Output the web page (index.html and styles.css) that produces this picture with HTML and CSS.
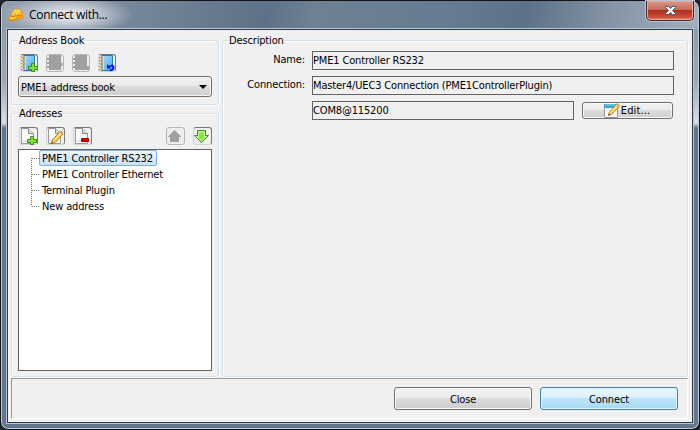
FILE: index.html
```html
<!DOCTYPE html>
<html lang="en"><head><meta charset="utf-8"><title>Connect with...</title><link rel="stylesheet" href="styles.css"></head>
<body>
<svg width="0" height="0" class="defs"><defs>
<linearGradient id="bk" x2="1" y2="1"><stop stop-color="#a5dcff"/><stop offset="1" stop-color="#4fa9ea"/></linearGradient>
<linearGradient id="hat" x2="0" y2="1"><stop stop-color="#ffd84a"/><stop offset="1" stop-color="#f08a05"/></linearGradient>
<g id="book"><path d="M3.5 1.500H14.500V16.500H3.500Z" fill="url(#bk)" stroke="#2879b7"/><path d="M5.500 2V16" stroke="#b7e4ff"/><path d="M1 3.500H5M1 6.500H5M1 9.500H5M1 12.500H5M1 15.500H5" stroke="#b99055" stroke-width="1.600"/><path d="M2 3H4M2 6H4M2 9H4M2 12H4M2 15H4" stroke="#ecd39c"/></g>
<g id="plus"><path d="M11.500 9.500H14.500V12.500H17.500V15.500H14.500V17.500H11.500V15.500H8.500V12.500H11.500Z" fill="#83e13b" stroke="#379018"/></g>
<g id="page"><path d="M2.500 1.500H9.500L14.500 6.500V16.500H2.500Z" fill="#fafafa" stroke="#999"/><path d="M9.500 1.500V6.500H14.500" fill="#ddd" stroke="#888"/><path d="M4 13H12V15H4Z" fill="#e0e0e0"/></g>
<g id="pencil"><path d="M5.500 16.500L6.500 13L14 4.500L17 7L9 15.500Z" fill="#ffd35c" stroke="#b47916"/><path d="M8 13L15 5.500" stroke="#fff0a8"/><path d="M13.500 5L16.500 7.500L17.500 6L15 3.500Z" fill="#d99a55"/><path d="M5 17L6 15L7 16Z" fill="#333"/></g>
</defs></svg>
<div class="window">
<header class="title"><svg class="hat" width="16" height="14"><path d="M.5 10.500C.5 8.500 2 8 3 7C4 3 6 1 9.500 1C13 1 14.500 4 14.500 7.500C15.500 8.500 15 10.500 13.500 10.500C10 10 8.500 12.500 5 12.800C2.500 13 .5 12.500 .5 10.500Z" fill="url(#hat)" stroke="#e08c12" stroke-width=".8"/><path d="M4.500 6.500C5.500 3.500 6.500 3 8 2M8.500 7C9 4.500 10 3 11.500 2.500M2 10C4 11 6 10.500 8 9" fill="none" stroke="#fff08a"/><path d="M3 8Q6 9.500 9 7.500Q12 6.500 14 8" fill="none" stroke="#d67d08" stroke-width=".8"/></svg><span class="caption">Connect with...</span>
<div class="close"><svg width="13" height="11"><path d="M1.500 1.500H4.500L6.500 3.500L8.500 1.500H11.500V2.500L8.500 5.500L11.500 8.500V9.500H8.500L6.500 7.500L4.500 9.500H1.500V8.500L4.500 5.500L1.500 2.500Z" fill="#fff" stroke="#535b6b"/></svg></div></header>
<main class="client">
<div class="columns">
<div class="left">
<section class="group books"><h2>Address Book</h2>
<div class="tools"><button class="tool"><svg width="19" height="19"><use href="#book"/><use href="#plus"/></svg></button><button class="tool off"><svg width="19" height="19"><path d="M3 1H15V8L17 10L15 13V16H3V14H1V12H3V10H1V8H3V6H1V4H3Z" fill="#a0a0a0"/></svg></button><button class="tool off"><svg width="19" height="19"><path d="M3 1H15V12H17V16H3V14H1V12H3V10H1V8H3V6H1V4H3Z" fill="#a0a0a0"/></svg></button><button class="tool"><svg width="19" height="19"><use href="#book"/><path d="M12 16.500C16.500 16 16.500 12 14 11.500L11 12.500" fill="none" stroke="#1117d5" stroke-width="1.800"/><path d="M9 10V14.500H13Z" fill="#1117d5"/></svg></button></div>
<div class="combo"><span>PME1 address book</span><i></i></div></section>
<section class="group addresses"><h2>Adresses</h2>
<div class="tools"><button class="tool"><svg width="19" height="19"><use href="#page"/><use href="#plus"/></svg></button><button class="tool"><svg width="19" height="19"><use href="#page"/><use href="#pencil"/></svg></button><button class="tool"><svg width="19" height="19"><use href="#page"/><path d="M8.500 11.500H15.500V14.500H8.500Z" fill="#e30000" stroke="#a40000"/></svg></button><button class="tool off up"><svg width="19" height="19"><path d="M8.500 3L15 9.500V10H13V15H4V10H2V9.500Z" fill="#a0a0a0"/></svg></button><button class="tool"><svg width="19" height="19"><path d="M4.500 3.500H12.500V8.500H15.500L8.500 15.500L1.500 8.500H4.500Z" fill="#8be64b" stroke="#368d18"/><path d="M5.500 4.500H11.500V9.500H13.500L8.500 14L3.500 9.500H5.500Z" fill="none" stroke="#d2f9aa"/></svg></button></div>
<ul class="tree"><li class="sel"><span>PME1 Controller RS232</span></li><li><span>PME1 Controller Ethernet</span></li><li><span>Terminal Plugin</span></li><li><span>New address</span></li></ul></section>
</div>
<section class="group description"><h2>Description</h2>
<div class="row"><label>Name:</label><div class="field"><span>PME1 Controller RS232</span></div></div>
<div class="row"><label>Connection:</label><div class="field"><span>Master4/UEC3 Connection (PME1ControllerPlugin)</span></div></div>
<div class="row"><label></label><div class="field"><span>COM8@115200</span></div><button class="btn edit"><svg width="16" height="16"><path d="M.5 1.500H13.500V14.500H.5Z" fill="#f6f6f6" stroke="#999"/><path d="M0 1H14V5H0Z" fill="#38a5d9"/><path d="M1 2H12" stroke="#8bd8fa"/><use href="#pencil" transform="translate(-.5 -3) scale(.92)"/></svg><span class="t-edit">Edit...</span></button></div>
</section></div>
<footer><button class="btn"><span>Close</span></button><button class="btn primary"><span>Connect</span></button></footer>
</main></div></body></html>
```
FILE: styles.css
```css
*{box-sizing:border-box}
body{margin:0;background:#24262a;font:11px/14px "DejaVu Sans Condensed","DejaVu Sans",sans-serif;font-stretch:condensed;letter-spacing:-.15px;color:#000;overflow:hidden}
.defs{position:absolute}
h2,ul{margin:0;padding:0}
button{padding:0;font:inherit;letter-spacing:inherit;color:#000}
span,h2,label{white-space:nowrap}
.window{width:700px;height:430px;border:1px solid #111319;border-radius:8px;padding:0 6px 6px;background:linear-gradient(#8796a7 0,#9aa7b5 80px,#d9e0e6 122px,#60748a 127px,#63778e);box-shadow:inset 0 0 0 1px #c3cdd5}
.title{height:28px;margin:0 -5px;padding:1px 0 0 6px;display:flex;align-items:flex-start;border-radius:6px 6px 0 0;background:radial-gradient(ellipse 65px 20px at 66px 14px,#dde2e8 20%,#dde2e800 100%),linear-gradient(100deg,#929fae 0,#77889a 18%,#5f7186 38%,#6f8193 45%,#667b91 65%,#5c7086 75%,#8594a5 87%,#a2afbd)}
.hat{margin-top:6px}
.caption{font:12px/16px "Open Sans",sans-serif;letter-spacing:-.3px;margin:5px 0 0 5px}
.close{margin:-1px 4px 0 auto;width:48px;height:20px;border:1px solid #4b2830;border-top:0;border-radius:0 0 5px 5px;box-shadow:inset 0 0 0 1px #e4aaa0,0 0 0 1px #b8c3cf;background:linear-gradient(#d79b8e,#c66b5a 45%,#b02f1d 50%,#ca503a 85%,#e58c72);display:flex;align-items:center;justify-content:center}
.client{height:394px;padding:5px 4px 3px 3px;background:#f0f0f0;border:1px solid #2e3b47;box-shadow:0 0 0 1px #b7c5d0;display:flex;flex-direction:column}
.columns{display:flex;gap:3px;height:342px}
.left{width:208px;display:flex;flex-direction:column;gap:1px}
.group{border:1px solid #d3dfe9;border-radius:3px;box-shadow:inset 1px 1px #fff,1px 1px #fff;padding:0 6px;margin-top:5px}
.group h2{font-size:11px;font-weight:400;line-height:14px;margin-top:-7px;width:max-content;background:#f0f0f0;padding:0 1px}
.books{height:65px}
.addresses{flex:1;margin-top:7px}
.description{flex:1}
.description h2{padding-left:0}
.tools{display:flex;gap:8px;padding-left:1px;margin-top:6px;height:19px}
.books .tools{padding-left:2px}
.tool{width:18px;height:18px;border:1px solid;border-color:#777 #777 #d3d3d3 #d3d3d3;border-radius:3px;background:#f1f1f1;display:flex;flex:none}
.addresses .tool{width:19px}
.tool svg{margin:-1px;flex:none}
.off,.addresses .off{border-color:#b2b9b9;background:#eee}
.up{margin-left:auto}
.combo{width:194px;height:21px;margin-top:3px;border:1px solid #707070;border-radius:3px;box-shadow:inset 0 0 0 1px #f6f6f6;background:linear-gradient(#f1f1f1,#e9e9e9 49%,#dcdcdc 50%,#cecece);padding:0 4px 0 2px;display:flex;align-items:center;justify-content:space-between}
.combo span,.btn span{padding-top:2px}
.combo i{border:4px solid transparent;border-top-color:#000;border-bottom:0}
.tree{list-style:none;width:194px;height:222px;margin-top:3px;border:1px solid #626262;background:#fff}
.tree li{height:16px;padding-left:21px;display:flex;align-items:center;background:repeating-linear-gradient(90deg,#777 0 1px,#fff 1px 2px) 13px 8px/8px 1px no-repeat,repeating-linear-gradient(#777 0 1px,#fff 1px 2px) 12px 0/1px 16px no-repeat}
.tree li:first-child{background-position:13px 8px,12px 8px}
.tree li:last-child{background-size:8px 1px,1px 8px}
.tree li span{padding:2px 2px 0}
.tree .sel span{width:118px;height:16px;margin-left:-1px;padding-top:1px;border:1px solid #7fafe0;border-radius:2px;background:linear-gradient(#eef6ff,#c9e0fb);line-height:14px}
.row{height:19px;display:flex;margin:0 7px 6px 0}
.description h2+.row{margin-top:3px}
.row label{width:76px;text-align:right;line-height:18px;margin-right:7px}
.field{flex:1;border:1px solid #626262;padding:0;line-height:17px}
.btn{width:138px;height:23px;border:1px solid #707070;border-radius:3px;box-shadow:inset 0 0 0 1px #f8f8f8;background:linear-gradient(#f2f2f2,#ebebeb 49%,#dcdcdc 50%,#cdcdcd);display:flex;align-items:center;justify-content:center}
.primary{border-color:#3c7fb1;background:linear-gradient(#eaf6fd,#d9f0fc 49%,#bce5fc 50%,#a7d9f5);box-shadow:inset 0 0 0 1px #e1f5fe}
.edit{width:91px;height:17px;margin:1px 1px 0 8px}
.edit svg{margin:1px 1px 0 -1px}
.edit .t-edit{letter-spacing:.1px;padding-top:1px}
footer{height:41px;margin-top:1px;border:1px solid;border-color:#999 #fff #fff #999;display:flex;gap:8px;justify-content:flex-end;padding:8px 9px 0 0}
```
